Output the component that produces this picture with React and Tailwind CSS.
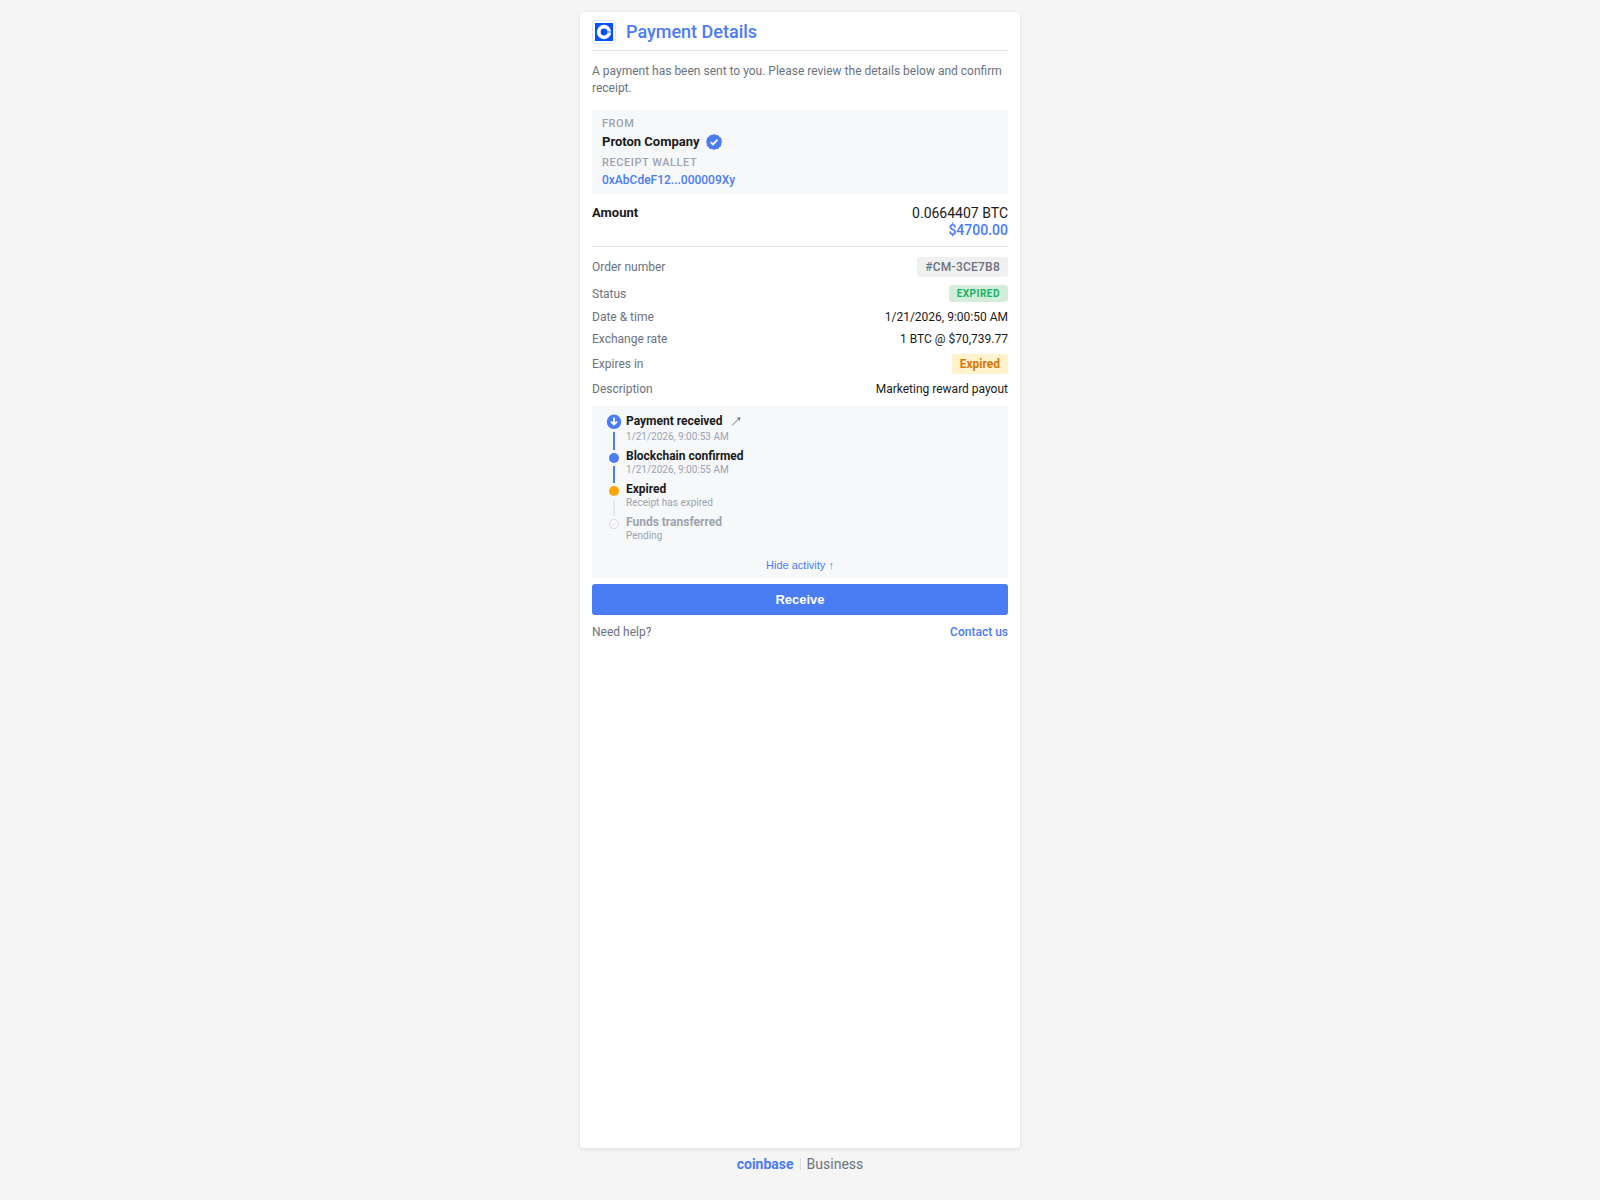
import { useState } from 'react'

const steps = [
  { title: 'Payment received', note: '1/21/2026, 9:00:53 AM', kind: 'received' },
  { title: 'Blockchain confirmed', note: '1/21/2026, 9:00:55 AM', kind: 'confirmed' },
  { title: 'Expired', note: 'Receipt has expired', kind: 'expired' },
  { title: 'Funds transferred', note: 'Pending', kind: 'pending' },
]

function Logo() {
  return (
    <span className="flex size-6 items-center justify-center rounded-sm border border-[#e5e7eb] bg-white">
      <svg viewBox="0 0 18 18" className="size-[18px]" aria-hidden="true">
        <rect width="18" height="18" fill="#0052ff" />
        <circle cx="9" cy="9" r="7.2" fill="#fff" />
        <circle cx="9" cy="9" r="3.4" fill="#0052ff" />
        <path d="M9 8.5h7v1H9z" fill="#0052ff" />
      </svg>
    </span>
  )
}

function VerifiedBadge() {
  return (
    <svg viewBox="0 0 24 24" className="size-4" role="img" aria-label="Verified">
      <path
        d="M12 0l3 1.6 3.4.1 1.8 2.9 2.9 1.8.1 3.4L24 12l-1.2 2.6-.1 3.4-2.7 1.8-1.8 2.7-3.4.1L12 24l-2.8-1.4-3.4-.1L4 19.8 1.3 18l-.1-3.4L0 12l1.2-2.6.1-3.4L4 4.4l1.8-2.7 3.4-.1z"
        fill="#4a7cf3"
      />
      <path d="M7 12.2l3.6 3.4 6.6-7" fill="none" stroke="#fff" strokeWidth="2.8" />
    </svg>
  )
}

function StepIcon({ kind }) {
  if (kind === 'received') {
    return (
      <svg viewBox="0 0 16 16" className="size-4 shrink-0" aria-hidden="true">
        <circle cx="8" cy="8.8" r="7.2" fill="#4a7cf3" />
        <path d="M8 4.4v7M5 8.6l3 3 3-3" fill="none" stroke="#fff" strokeWidth="1.8" />
      </svg>
    )
  }
  if (kind === 'pending') {
    return (
      <svg viewBox="0 0 10 10" className="size-[10px] shrink-0" aria-hidden="true">
        <circle cx="5" cy="5" r="4.5" fill="#fff" stroke="#d1d5db" />
        <path d="M2.8 5.2l1.5 1.4 3-3.2" fill="none" stroke="#d1d5db" strokeWidth="0.9" />
      </svg>
    )
  }
  return (
    <span className={`size-[10px] shrink-0 rounded-full ${kind === 'expired' ? 'bg-[#ffa500]' : 'bg-[#4a7cf3]'}`} />
  )
}

function Step({ step, last }) {
  const first = step.kind === 'received'
  return (
    <li className="flex gap-1">
      <div className={`flex w-4 flex-col items-center gap-[3px] ${first ? '' : 'pt-1'}`}>
        <StepIcon kind={step.kind} />
        {!last && (
          <span className={`-mb-px w-0.5 flex-1 ${step.kind === 'expired' ? 'bg-[#e5e7eb]' : 'bg-[#4a7cf3]'}`} />
        )}
      </div>
      <div className="pb-[6px]">
        <div
          className={`flex items-center gap-2 text-[12px] font-bold ${first ? 'leading-[17px]' : 'leading-[14px]'} ${
            last ? 'text-[#9ca3af]' : 'text-[#1a1a1a]'
          }`}
        >
          {step.title}
          {first && (
            <a href="#transaction" aria-label="View transaction">
              <svg viewBox="0 0 10 10" className="size-[10px]" aria-hidden="true">
                <path d="M1 8.5L8.2 1.3" fill="none" stroke="#6b7280" strokeWidth="1" />
                <path d="M9.4.2L8.8 4.2 7.6 2 5.4.8z" fill="#6b7280" />
              </svg>
            </a>
          )}
        </div>
        <div className="mt-px text-[10px] leading-[12px] text-[#9ca3af]">{step.note}</div>
      </div>
    </li>
  )
}

function Row({ label, children }) {
  return (
    <div className="flex items-center justify-between">
      <dt className="text-[#6b7280]">{label}</dt>
      <dd className="text-[#1a1a1a]">{children}</dd>
    </div>
  )
}

export default function App() {
  const [showActivity, setShowActivity] = useState(true)

  return (
    <div className="flex min-h-screen flex-col items-center bg-[#f5f5f5] pt-3 font-['Roboto','Liberation_Sans',sans-serif] text-[12px] leading-[14px]">
      <main className="flex w-full max-w-[440px] flex-1 flex-col rounded-sm bg-white px-3 pt-2 shadow-[0_1px_4px_rgba(0,0,0,0.1)]">
        <header className="flex items-center gap-[10px] border-b border-[#e5e7eb] pb-[6px]">
          <Logo />
          <h1 className="text-[18px] leading-6 font-medium text-[#4a7cf3]">Payment Details</h1>
        </header>

        <p className="mt-3 leading-[17px] text-[#6b7280]">
          A payment has been sent to you. Please review the details below and confirm receipt.
        </p>

        <section className="mt-3 rounded-sm bg-[#f7f8fa] px-[10px] py-2">
          <div className="text-[11px] leading-[13px] font-medium tracking-wider text-[#9ca3af]">FROM</div>
          <div className="mt-1 flex items-center gap-[6px] text-[13px] leading-4 font-bold text-[#1a1a1a]">
            Proton Company
            <VerifiedBadge />
          </div>
          <div className="mt-[6px] text-[11px] leading-[13px] font-medium tracking-wider text-[#9ca3af]">
            RECEIPT WALLET
          </div>
          <div className="mt-1 font-medium text-[#4a7cf3]">0xAbCdeF12...000009Xy</div>
        </section>

        <section className="flex justify-between border-b border-[#e5e7eb] pt-[10px] pb-[7px]">
          <h2 className="text-[13px] leading-4 font-bold text-[#1a1a1a]">Amount</h2>
          <div className="text-right text-[14px] leading-[17px]">
            <div className="text-[#1a1a1a]">0.0664407 BTC</div>
            <div className="font-medium text-[#4a7cf3]">$4700.00</div>
          </div>
        </section>

        <dl className="mt-[10px] flex flex-col gap-2">
          <Row label="Order number">
            <span className="block rounded-[3px] bg-[#f0f0f0] px-2 py-[3px] font-medium tracking-[0.02em] text-[#6b7280]">
              #CM-3CE7B8
            </span>
          </Row>
          <Row label="Status">
            <span className="block rounded-[3px] bg-[#d4edda] px-2 py-[2px] text-[10px] leading-[13px] font-bold tracking-wider text-[#16b364]">
              EXPIRED
            </span>
          </Row>
          <Row label="Date & time">1/21/2026, 9:00:50 AM</Row>
          <Row label="Exchange rate">1 BTC @ $70,739.77</Row>
          <Row label="Expires in">
            <span className="block rounded-[3px] bg-[#fff3cd] px-2 py-[3px] font-bold text-[#d97706]">Expired</span>
          </Row>
          <Row label="Description">Marketing reward payout</Row>
        </dl>

        <section className="mt-[10px] rounded-sm bg-[#f7f8fa] px-[14px] py-[7px]">
          {showActivity && (
            <ol>
              {steps.map((step, i) => (
                <Step key={step.title} step={step} last={i === steps.length - 1} />
              ))}
            </ol>
          )}
          <button
            type="button"
            onClick={() => setShowActivity(!showActivity)}
            className="mt-[10px] block w-full text-center font-['Liberation_Sans',sans-serif] text-[11px] leading-[14px] text-[#4a7cf3]"
          >
            {showActivity ? 'Hide activity ↑' : 'Show activity ↓'}
          </button>
        </section>

        <button
          type="button"
          className="mt-[5px] rounded-[3px] bg-[#4a7cf3] py-2 font-['Liberation_Sans',sans-serif] text-[13px] leading-[15px] font-bold text-white"
        >
          Receive
        </button>

        <div className="mt-[10px] flex justify-between text-[#6b7280]">
          <span>Need help?</span>
          <a href="#contact" className="font-medium text-[#4a7cf3]">
            Contact us
          </a>
        </div>
      </main>

      <footer className="flex items-center gap-[6px] pt-2 pb-7 text-[14px] leading-4">
        <span className="font-bold text-[#4a7cf3]">coinbase</span>
        <span className="h-3 w-px bg-[#d9dbdf]" />
        <span className="text-[#6b7280]">Business</span>
      </footer>
    </div>
  )
}
